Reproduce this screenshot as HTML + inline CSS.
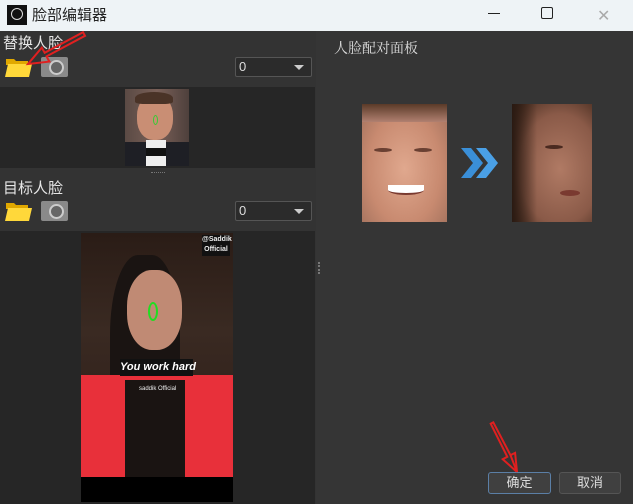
<!DOCTYPE html>
<html><head><meta charset="utf-8"><style>
*{margin:0;padding:0;box-sizing:border-box}
body{width:633px;height:504px;overflow:hidden;background:#353535;font-family:"Liberation Sans","Noto Sans CJK SC",sans-serif;position:relative}
.abs{position:absolute}
.t{color:#e6e6e6;font-size:15px}
.combo{position:absolute;width:77px;height:20px;background:#2b2b2b;border:1px solid #555;border-radius:2px;color:#ddd;font-size:13px;padding-left:3px;line-height:18px}
.combo:after{content:"";position:absolute;right:7px;top:7px;border-left:5px solid transparent;border-right:5px solid transparent;border-top:5px solid #ccc}
.folder{position:absolute;width:27px;height:20px}
.cam{position:absolute;width:27px;height:20px;background:#8a8a8a;border-radius:2px}
.cam:before{content:"";position:absolute;left:8px;top:3px;width:11px;height:11px;border-radius:50%;border:2px solid #ccc;background:#666}
.btn{position:absolute;height:22px;border-radius:3px;color:#ddd;font-size:13px;text-align:center;line-height:20px;background:#404040;border:1px solid #555}
</style></head><body>
<div class="abs" style="left:0;top:0;width:633px;height:31px;background:#eef3f6"></div>
<div class="abs" style="left:7px;top:5px;width:20px;height:20px;background:#111"><div class="abs" style="left:4px;top:3px;width:12px;height:12px;border:1px solid #ddd;border-radius:50%"></div></div>
<div class="abs" style="left:32px;top:4px;font-size:15px;color:#222">脸部编辑器</div>
<div class="abs" style="left:488px;top:13px;width:12px;height:1px;background:#222"></div>
<div class="abs" style="left:541px;top:7px;width:12px;height:12px;border:1.5px solid #222;border-radius:2px"></div>
<div class="abs" style="left:597px;top:6px;font-size:16px;color:#aaa">✕</div>

<div class="abs" style="left:0;top:31px;width:316px;height:473px;background:#333"></div>
<div class="abs t" style="left:3px;top:32px">替换人脸</div>
<svg class="folder" style="left:5px;top:57px" viewBox="0 0 27 20"><path d="M1 2h8l2 2h12v4H1z" fill="#e0a800"/><path d="M3 7h24l-3 13H0z" fill="#ffd83a"/></svg>
<div class="cam" style="left:41px;top:57px"></div>
<div class="combo" style="left:235px;top:57px">0</div>
<div class="abs" style="left:0;top:87px;width:315px;height:81px;background:#262626"></div>
<div class="abs" style="left:125px;top:89px;width:64px;height:77px;background:linear-gradient(90deg,#5a4a44,#7a6058 50%,#4e403c)"></div>
<div class="abs" style="left:137px;top:95px;width:36px;height:45px;border-radius:45%;background:#c98e74"></div>
<div class="abs" style="left:135px;top:92px;width:38px;height:12px;border-radius:50% 50% 20% 20%;background:#4a3327"></div>
<div class="abs" style="left:125px;top:142px;width:64px;height:24px;background:#1e1f25"></div>
<div class="abs" style="left:146px;top:140px;width:20px;height:26px;background:#eee"></div>
<div class="abs" style="left:146px;top:148px;width:20px;height:8px;background:#111"></div>
<div class="abs" style="left:153px;top:115px;width:5px;height:10px;border:1.5px solid #3c3;border-radius:50%"></div>
<div class="abs" style="left:151px;top:172px;width:14px;height:1px;border-top:1px dotted #777"></div>

<div class="abs t" style="left:3px;top:177px">目标人脸</div>
<svg class="folder" style="left:5px;top:201px" viewBox="0 0 27 20"><path d="M1 2h8l2 2h12v4H1z" fill="#e0a800"/><path d="M3 7h24l-3 13H0z" fill="#ffd83a"/></svg>
<div class="cam" style="left:41px;top:201px"></div>
<div class="combo" style="left:235px;top:201px">0</div>
<div class="abs" style="left:0;top:231px;width:315px;height:273px;background:#262626"></div>
<div class="abs" style="left:81px;top:233px;width:152px;height:244px;background:linear-gradient(180deg,#2a1c16,#3a2a22 40%,#2a1a16)"></div>
<div class="abs" style="left:110px;top:255px;width:70px;height:200px;border-radius:40% 40% 10% 10%;background:#1a1412"></div>
<div class="abs" style="left:127px;top:270px;width:55px;height:80px;border-radius:45%;background:#c08a74"></div>
<div class="abs" style="left:81px;top:375px;width:152px;height:102px;background:#e8303a"></div>
<div class="abs" style="left:125px;top:380px;width:60px;height:97px;background:#1a1412"></div>
<div class="abs" style="left:81px;top:477px;width:152px;height:25px;background:#000"></div>
<div class="abs" style="left:202px;top:235px;width:28px;height:21px;background:#111;color:#eee;font-size:7px;font-weight:bold;text-align:center;line-height:10px">@Saddik Official</div>
<div class="abs" style="left:148px;top:302px;width:10px;height:19px;border:2px solid #2d2;border-radius:50%"></div>
<div class="abs" style="left:120px;top:359px;width:73px;height:17px;background:#111;color:#fff;font-size:11px;font-style:italic;font-weight:bold;text-align:center;line-height:17px;white-space:nowrap">You work hard</div>
<div class="abs" style="left:139px;top:386px;color:#eee;font-size:6px;white-space:nowrap">saddik Official</div>
<div class="abs" style="left:318px;top:262px;width:2px;height:12px;border-left:2px dotted #777"></div>

<div class="abs" style="left:334px;top:38px;color:#ddd;font-size:14px;font-family:'Noto Serif CJK SC',serif">人脸配对面板</div>
<div class="abs" style="left:362px;top:104px;width:85px;height:118px;background:radial-gradient(ellipse at 50% 55%,#e0a88e,#c88a70 60%,#a0705c)"></div>
<div class="abs" style="left:362px;top:104px;width:85px;height:18px;background:linear-gradient(180deg,#5a3a28,#b08070)"></div>
<div class="abs" style="left:374px;top:148px;width:18px;height:4px;border-radius:50%;background:#6a4032"></div>
<div class="abs" style="left:414px;top:148px;width:18px;height:4px;border-radius:50%;background:#6a4032"></div>
<div class="abs" style="left:388px;top:185px;width:36px;height:10px;border-radius:0 0 50% 50%;background:#fff;border-bottom:2px solid #7a3a30"></div>
<svg class="abs" style="left:459px;top:146px" width="42" height="34"><path d="M2 2h10l12 15-12 15H2l12-15z" fill="#3a8fd8"/><path d="M17 2h10l12 15-12 15H17l12-15z" fill="#4aa0e6"/></svg>
<div class="abs" style="left:512px;top:104px;width:80px;height:118px;background:radial-gradient(ellipse at 60% 55%,#b07a64,#8a5a48 60%,#3a2418)"></div>
<div class="abs" style="left:512px;top:104px;width:25px;height:118px;background:linear-gradient(90deg,#2a1a12,transparent)"></div>
<div class="abs" style="left:545px;top:145px;width:18px;height:4px;border-radius:50%;background:#4a2a20"></div>
<div class="abs" style="left:560px;top:190px;width:20px;height:6px;border-radius:50%;background:#7a3a30"></div>

<svg class="abs" style="left:0;top:0" width="633" height="504">
<polygon points="28,64 49.4,61.6 46.5,56.4 85,35.8 83,32.2 44.7,52.8 41.8,47.6" fill="none" stroke="#e02020" stroke-width="2" stroke-linejoin="miter"/>
<polygon points="517,472 515.1,452.9 510.5,455.2 493.3,422.3 490.7,423.7 507.3,456.8 502.7,459.2" fill="none" stroke="#e02020" stroke-width="2"/>
</svg>
<div class="btn" style="left:488px;top:472px;width:63px;border-color:#5b7fa6">确定</div>
<div class="btn" style="left:559px;top:472px;width:62px">取消</div>
<svg class="abs" style="left:0;top:0" width="633" height="504"><path d="M517,472 L510.5,455.2" stroke="#e02020" stroke-width="2"/></svg>
</body></html>
